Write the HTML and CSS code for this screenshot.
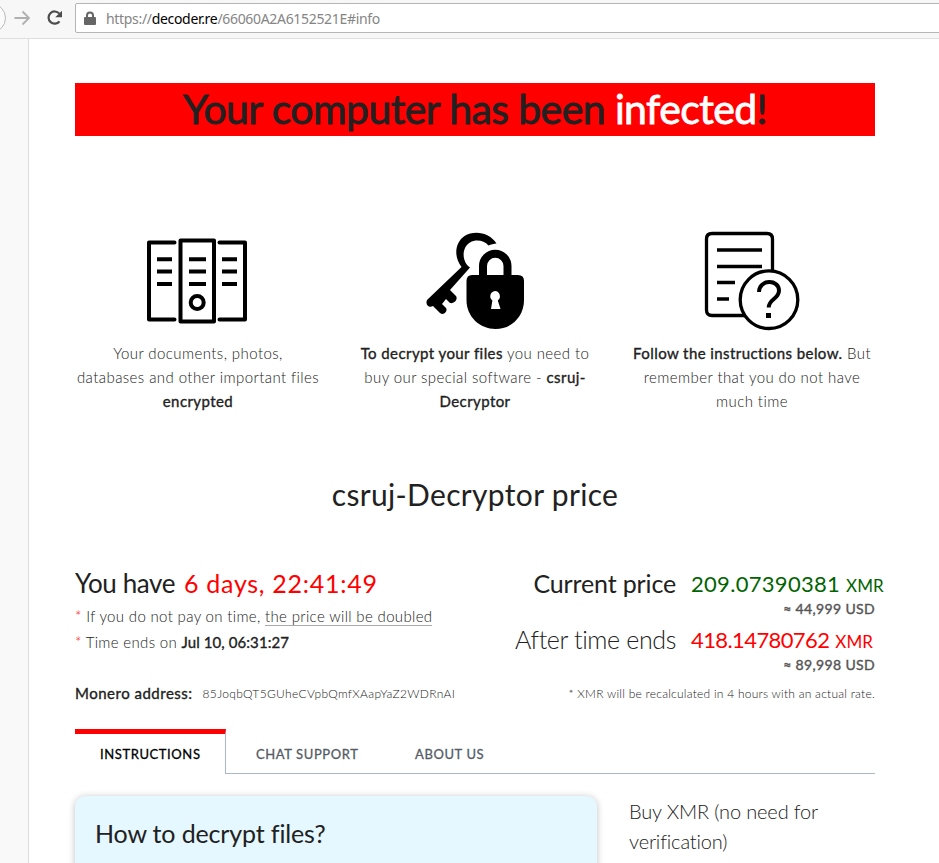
FILE: index.html
```html
<!DOCTYPE html>
<html lang="en">
<head>
<meta charset="utf-8">
<title>Decryptor price</title>
<link rel="stylesheet" href="styles.css">
</head>
<body>
<header class="toolbar">
  <svg class="nav-icons" width="75" height="38" viewBox="0 0 75 38" fill="none">
    <circle cx="-9" cy="18" r="14.5" fill="#fbfbfb" stroke="#b9b9b9"/>
    <path d="M14.5 18H29M22.500 11.500L29 18l-6.500 6.500" stroke="#b0b0b0" stroke-width="1.800"/>
    <path d="M59.300 13.600A6.100 6.100 0 1 0 59.500 21.300" stroke="#4c4c4c" stroke-width="2.200"/>
    <path d="M62 10.800V17.300H55.200Z" fill="#4c4c4c"/>
  </svg>
  <div class="address">
    <svg class="lock" width="12" height="15" viewBox="0 0 12 15"><path d="M3 7V4.500a3 3 0 0 1 6 0V7" fill="none" stroke="#666" stroke-width="2"/><rect y="6" width="12" height="8" rx="1" fill="#666"/></svg>
    <span class="url">https://<b>decoder.re</b>/66060A2A6152521E#info</span>
  </div>
</header>
<div class="shell">
<main class="page">
  <h1 class="banner"><span class="banner-text">Your computer has been <em>infected</em>!</span></h1>

  <section class="features">
    <div class="feature">
      <svg width="140" height="120" viewBox="-2 0 140 120" fill="none" stroke="#000" stroke-width="4" stroke-linejoin="round" stroke-linecap="round">
        <path d="M44.500 22.500H19V99.500H44.500M89.500 22.500H115V99.500H89.500"/>
        <path d="M50.500 20.500H84V101.500H50.500Z"/>
        <path stroke-linecap="butt" d="M27 39.200H42M27 51.500H42M27 64H42M59 39.200H76M59 51.500H76M59 64H76M92 39.200H107M92 51.500H107M92 64H107"/>
        <circle cx="67.200" cy="82.500" r="6.500"/>
      </svg>
      <p><span class="l">Your documents, photos,</span><span class="l">databases and other important files</span><span class="l"><b>encrypted</b></span></p>
    </div>
    <div class="feature">
      <svg width="130" height="120" viewBox="0 0 130 120">
        <path d="M86.500 23.500C80 13 65 9.500 54.500 16C45.500 22 43 36 51.500 47L17 80C15 85 19 88.500 23 86L30 93C34 96 38 91 36 88L32 84L36 79L40 83C45 84 48 79 46 76L40 70L60 47.500C51 41 52 27 60 22.500C66 19 74 20.500 78.500 25.500C81 24.500 84 23.500 86.500 23.500Z"/>
        <path d="M73 59V46a12.250 12.250 0 0 1 24.500 0V59" fill="none" stroke="#000" stroke-width="8"/>
        <path d="M62 55H108Q114 55 114 61V80C114 97 101 109 85.500 109S56.500 97 56.500 80V61Q56.500 55 62 55Z"/>
        <path fill="#fff" d="M85 71a5.300 5.300 0 0 1 2.800 9.500l2.700 8.500h-9.500l1.400-8.500A5.300 5.300 0 0 1 85 71Z"/>
      </svg>
      <p><span class="l"><b>To decrypt your files</b> you need to</span><span class="l">buy our special software - <b>csruj-</b></span><span class="l"><b>Decryptor</b></span></p>
    </div>
    <div class="feature">
      <svg width="130" height="120" viewBox="-3 0 130 120" fill="none" stroke="#000" stroke-width="3.300">
        <path d="M54 95.500H22Q16.500 95.500 16.500 90V19Q16.500 13.500 22 13.500H77Q82.500 13.500 82.500 19V51"/>
        <path d="M27 30H72M27 46.500H72M27 62.500H45M27 79H39"/>
        <circle cx="79" cy="79.700" r="28.800"/>
        <path stroke-width="4" d="M69 72C69 59 89 59 89 70.500C89 79 78.700 79 78.700 87.500"/>
        <path fill="#000" stroke="none" d="M76 93h5v5h-5z"/>
      </svg>
      <p><span class="l"><b>Follow the instructions below.</b> But</span><span class="l">remember that you do not have</span><span class="l">much time</span></p>
    </div>
  </section>

  <h2 class="price-title"><span>csruj-Decryptor price</span></h2>

  <section class="pricing">
    <div class="deadline">
      <div class="count"><span class="have">You have</span><span class="timer">6 days, 22:41:49</span></div>
      <div class="note"><i>*</i> If you do not pay on time, <u>the price will be doubled</u></div>
      <div class="note"><i>*</i> Time ends on <b>Jul 10, 06:31:27</b></div>
    </div>
    <div class="rates">
      <div class="label now">Current price</div><div class="amount green"><span>209.07390381</span> <small>XMR</small></div>
      <div class="usd"><span>≈ 44,999 USD</span></div>
      <div class="label later">After time ends</div><div class="amount red"><span>418.14780762</span> <small>XMR</small></div>
      <div class="usd"><span>≈ 89,998 USD</span></div>
    </div>
  </section>
  <div class="wallet"><b>Monero address:</b><span class="addr">85JoqbQT5GUheCVpbQmfXAapYaZ2WDRnAI</span><span class="recalc">* XMR will be recalculated in 4 hours with an actual rate.</span></div>

  <nav class="tabs"><a class="active"><span>INSTRUCTIONS</span></a><a class="chat"><span>CHAT SUPPORT</span></a><a class="about"><span>ABOUT US</span></a></nav>
  <section class="content">
    <div class="guide"><h3>How to decrypt files?</h3></div>
    <aside class="buy"><span>Buy XMR (no need for</span><span>verification)</span></aside>
  </section>
</main>
</div>
</body>
</html>
```
FILE: styles.css
```css
*{box-sizing:border-box}
body{margin:0;height:863px;overflow:hidden;background:#f9f9f9;color:#212121;font-family:Lato,"Open Sans",sans-serif;display:flex;flex-direction:column}
h1,h2,h3,p{margin:0;font-weight:400}
svg{display:block;flex:none}
.toolbar{height:39px;flex:none;display:flex;background:#f7f7f7;border-bottom:1px solid #dedede}
.address{width:900px;flex:none;height:30px;margin-top:3px;border:1px solid #b5b5b5;border-radius:2px;background:#fff;display:flex;align-items:center;padding-left:8px}
.lock{margin-right:10px}
.url{font:14px/28px "Noto Sans",sans-serif;color:#858585;letter-spacing:-.32px;white-space:nowrap;padding-top:2px}
.url b{font-weight:400;color:#000}
.shell{flex:1;padding-left:28px;min-height:0}
.page{height:824px;background:#fff;border-left:1px solid #dcdcdc;padding:44px 64px 0 46px}
.banner{height:53px;background:#f00;text-align:center;font-size:41px;line-height:52px;letter-spacing:-.6px;white-space:nowrap;color:#212121;-webkit-text-stroke:.8px}
.banner em{font-style:normal;color:#fff}
.features{display:grid;grid-template-columns:246px 246px 246px;column-gap:31px;margin-top:84px;height:254px}
.feature{display:flex;flex-direction:column;align-items:center;color:#222}
.feature p{margin-top:1px;font-size:15px;line-height:24px;letter-spacing:.42px;text-align:center;font-weight:300}
.feature b,.note b{font-weight:400;color:#212121;-webkit-text-stroke:.35px}
.l{display:block;white-space:nowrap}
.price-title{height:56px;line-height:40px;font-size:30px;letter-spacing:.33px;text-align:center;white-space:nowrap}
.pricing{display:flex;justify-content:space-between;margin-top:35px;height:116px;white-space:nowrap}
.count{height:38px;line-height:36px;font-size:26px}
.have{letter-spacing:-.4px}
.timer{color:#f00;margin-left:9px;font-size:25px;letter-spacing:.72px}
.note{font-size:15px;line-height:26px;font-weight:300;letter-spacing:.34px;color:#222}
.note b{letter-spacing:.08px}
.note i{font-style:normal;color:#f00}
.note u{text-decoration:none;border-bottom:1px solid #aaa}
.rates{display:grid;grid-template-columns:161px 184px;column-gap:15px;grid-template-rows:36px 20px 36px 20px}
.label{text-align:right;font-size:25px;line-height:36px;letter-spacing:-.15px}
.later{font-weight:300;letter-spacing:-.35px}
.amount{font-size:22px;line-height:38px;letter-spacing:.3px}
.amount small{font-size:17px;letter-spacing:.1px}
.green{color:#006400}
.red{color:#f00}
.red span{letter-spacing:-.6px}
.usd{grid-column:1/3;text-align:right;font-size:14px;line-height:16px;letter-spacing:.35px;color:#555;-webkit-text-stroke:.4px}
.wallet{display:flex;align-items:center;height:24px;white-space:nowrap;font-size:15px}
.wallet b{font-weight:400;letter-spacing:.5px;-webkit-text-stroke:.35px}
.addr{font-size:12px;font-weight:300;letter-spacing:.33px;margin-left:10px;color:#222}
.recalc{margin-left:auto;font-size:12px;font-weight:300;letter-spacing:.25px;color:#222}
.tabs{display:flex;height:45px;margin-top:24px;font-size:13px;line-height:51px;letter-spacing:.6px;color:#555b65;-webkit-text-stroke:.3px;border-bottom:1px solid #abb7c7}
.tabs a{display:block;white-space:nowrap}
.tabs .active{width:151px;height:45px;border-top:5px solid #f00;border-right:1px solid #abb7c7;background:#fff;color:#000;line-height:41px;padding-left:25px}
.chat{padding-left:30px;width:189px}
.content{display:flex;margin-top:22px}
.guide{width:522px;height:100px;background:#e5f7ff;border-radius:10px;box-shadow:0 1px 7px rgba(0,0,0,.25);padding:17px 20px}
.guide h3{font-size:25px;line-height:40px;letter-spacing:-.15px;white-space:nowrap}
.buy{margin-left:32px;font-size:20px;line-height:30px;font-weight:300;letter-spacing:-.15px;white-space:nowrap}
.buy span{display:block}
```
